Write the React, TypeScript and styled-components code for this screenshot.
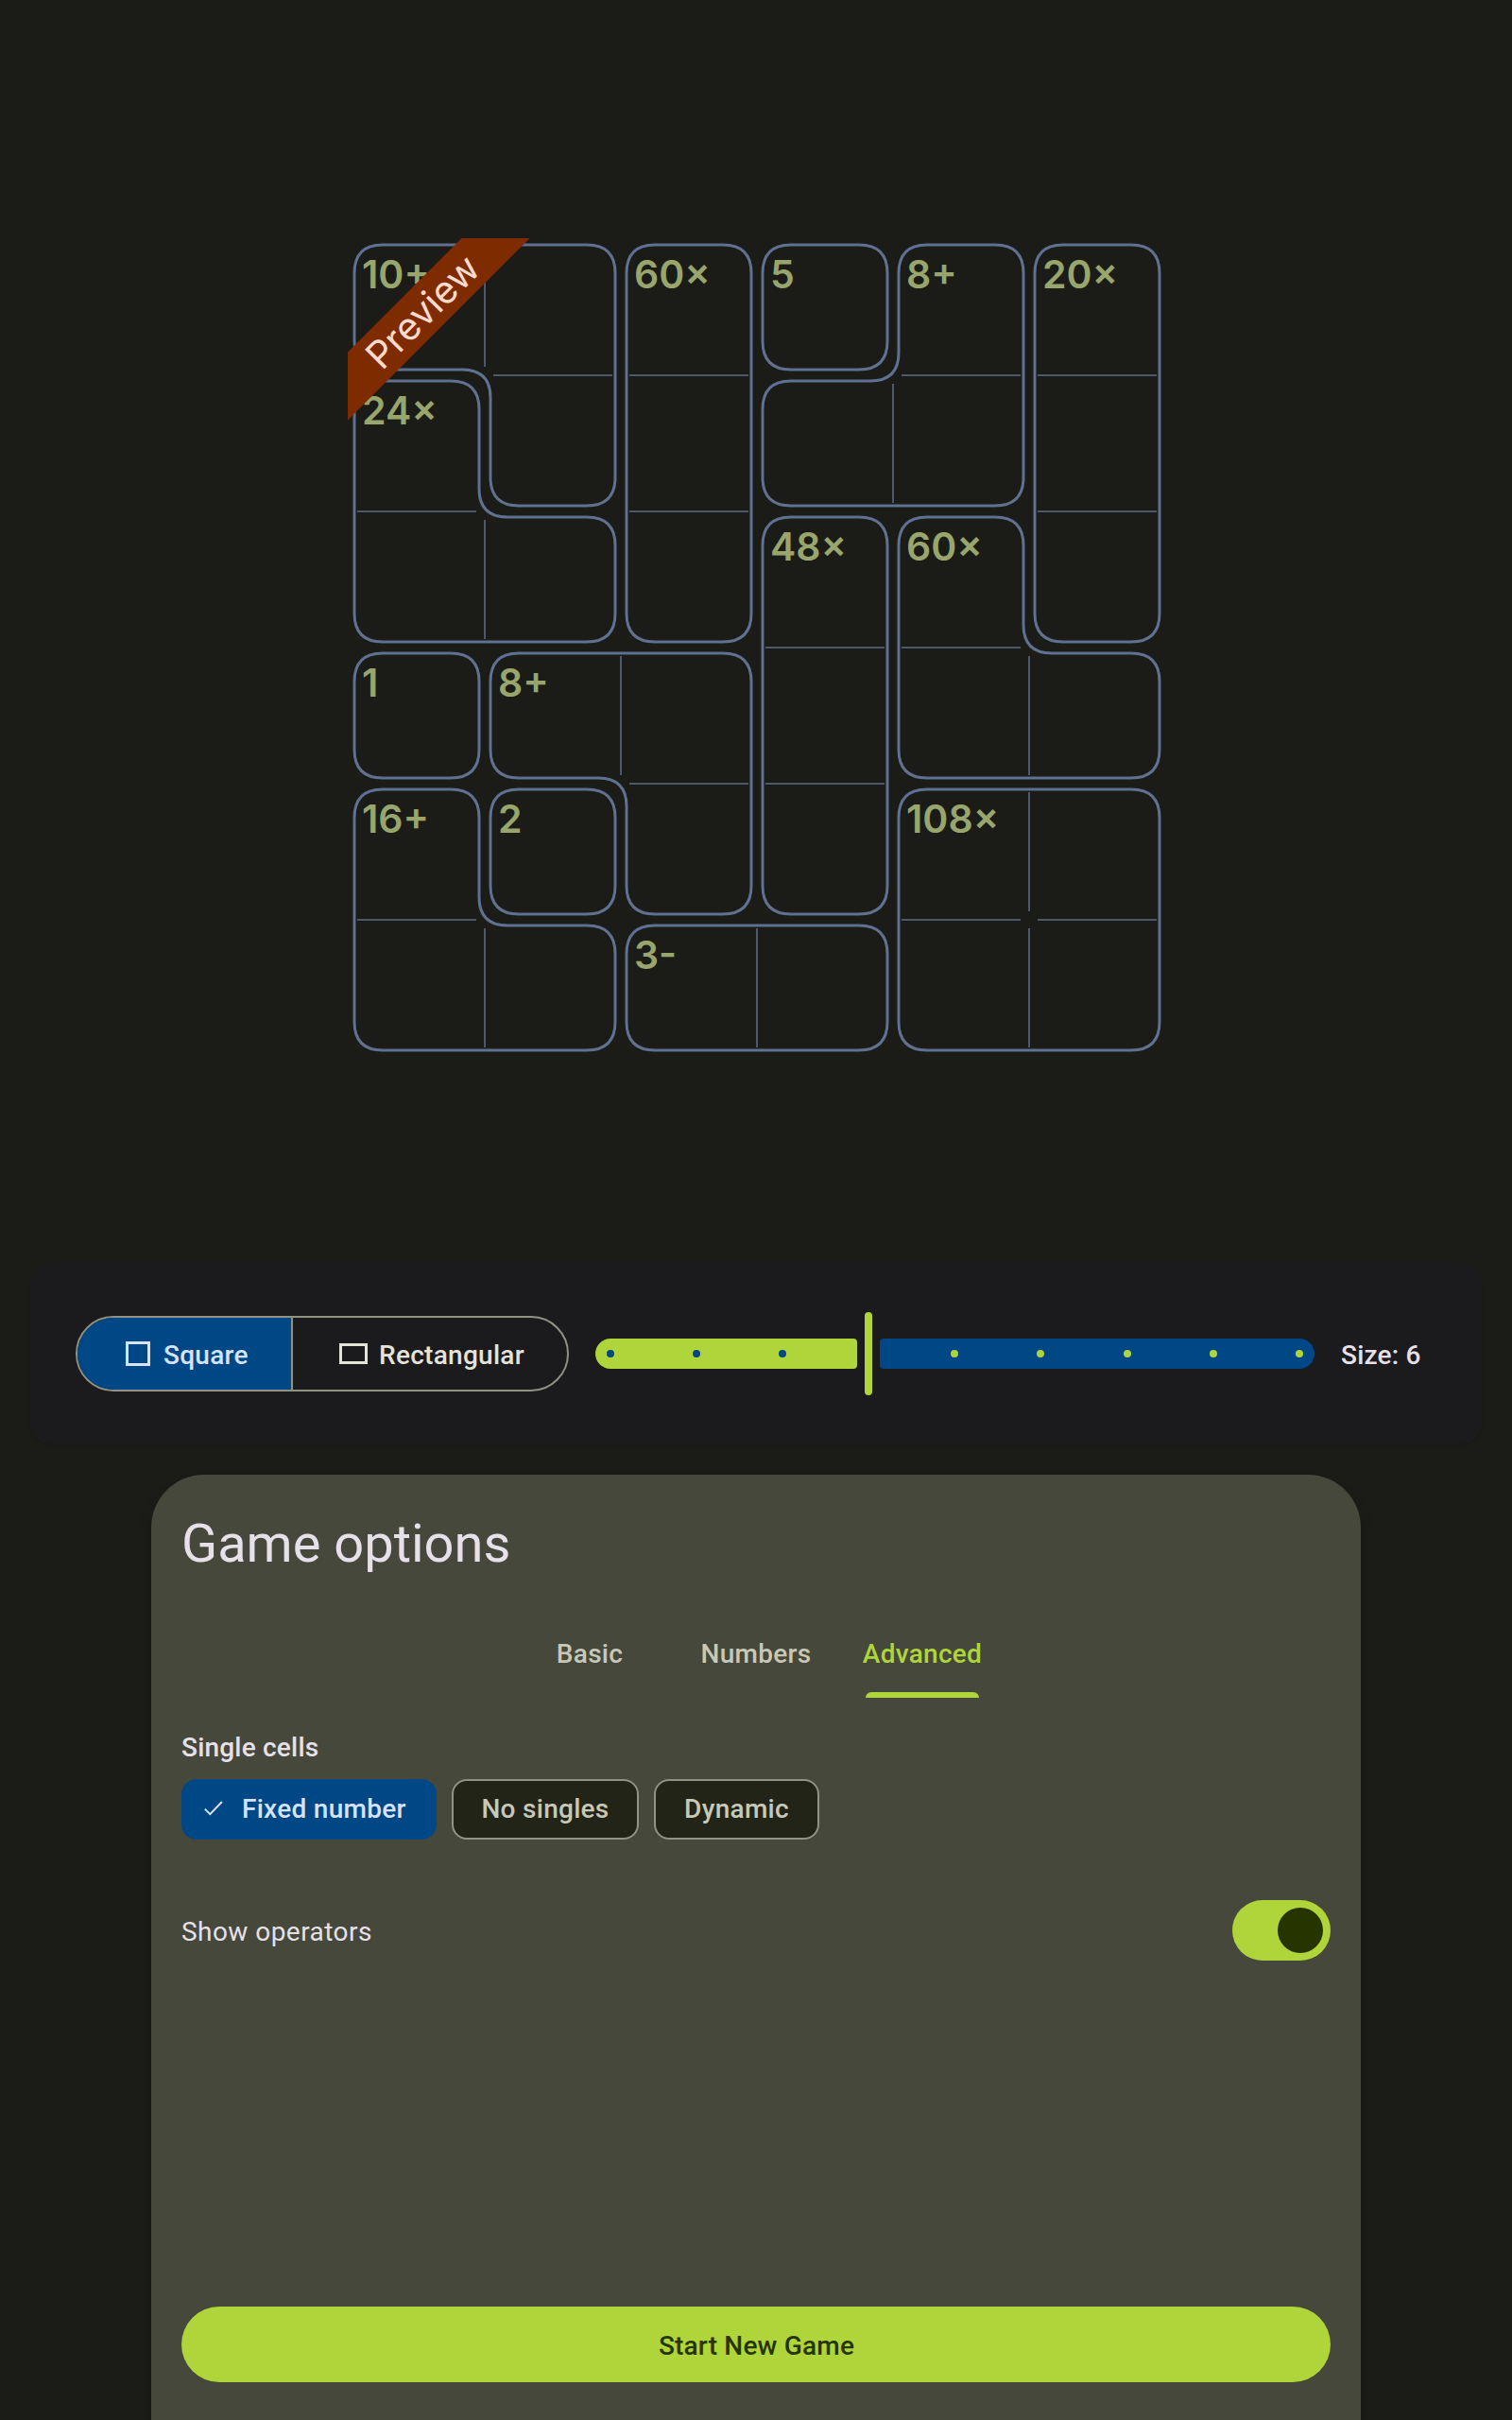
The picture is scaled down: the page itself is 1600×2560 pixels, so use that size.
import React from "react";
import styled, { createGlobalStyle } from "styled-components";

const CELL = 144;
const INSET = 6;
const GAP = 9;
const RADIUS = 30;
const N = 6;

type Cell = [number, number];
type Cage = { clue: string; cells: Cell[] };

const cages: Cage[] = [
  { clue: "10+", cells: [[0, 0], [0, 1], [1, 1]] },
  { clue: "60×", cells: [[0, 2], [1, 2], [2, 2]] },
  { clue: "5", cells: [[0, 3]] },
  { clue: "8+", cells: [[0, 4], [1, 4], [1, 3]] },
  { clue: "20×", cells: [[0, 5], [1, 5], [2, 5]] },
  { clue: "24×", cells: [[1, 0], [2, 0], [2, 1]] },
  { clue: "48×", cells: [[2, 3], [3, 3], [4, 3]] },
  { clue: "60×", cells: [[2, 4], [3, 4], [3, 5]] },
  { clue: "1", cells: [[3, 0]] },
  { clue: "8+", cells: [[3, 1], [3, 2], [4, 2]] },
  { clue: "16+", cells: [[4, 0], [5, 0], [5, 1]] },
  { clue: "2", cells: [[4, 1]] },
  { clue: "108×", cells: [[4, 4], [4, 5], [5, 4], [5, 5]] },
  { clue: "3-", cells: [[5, 2], [5, 3]] },
];

const has = (cells: Cell[], r: number, c: number) =>
  cells.some(([a, b]) => a === r && b === c);

// Walks the cage boundary clockwise and rounds every corner of the inset outline.
function outline(cells: Cell[]): string {
  const next = new Map<string, [number, number]>();
  const add = (x1: number, y1: number, x2: number, y2: number) =>
    next.set(`${x1},${y1}`, [x2, y2]);
  cells.forEach(([r, c]) => {
    if (!has(cells, r - 1, c)) add(c, r, c + 1, r);
    if (!has(cells, r, c + 1)) add(c + 1, r, c + 1, r + 1);
    if (!has(cells, r + 1, c)) add(c + 1, r + 1, c, r + 1);
    if (!has(cells, r, c - 1)) add(c, r + 1, c, r);
  });
  const start: [number, number] = [cells[0][1], cells[0][0]];
  const loop: [number, number][] = [];
  let p = start;
  do {
    loop.push(p);
    p = next.get(`${p[0]},${p[1]}`)!;
  } while (p[0] !== start[0] || p[1] !== start[1]);

  const parts: string[] = [];
  loop.forEach((q, i) => {
    const a = loop[(i + loop.length - 1) % loop.length];
    const b = loop[(i + 1) % loop.length];
    const din = [q[0] - a[0], q[1] - a[1]];
    const dout = [b[0] - q[0], b[1] - q[1]];
    if (din[0] === dout[0] && din[1] === dout[1]) return;
    const x = q[0] * CELL - INSET * (din[1] + dout[1]);
    const y = q[1] * CELL + INSET * (din[0] + dout[0]);
    parts.push(
      `${parts.length ? "L" : "M"}${x - din[0] * RADIUS} ${y - din[1] * RADIUS}` +
        `Q${x} ${y} ${x + dout[0] * RADIUS} ${y + dout[1] * RADIUS}`
    );
  });
  return parts.join("") + "Z";
}

function dividers(cells: Cell[]): string {
  let d = "";
  cells.forEach(([r, c]) => {
    const x = c * CELL;
    const y = r * CELL;
    if (has(cells, r, c + 1)) d += `M${x + CELL} ${y + GAP}V${y + CELL - GAP}`;
    if (has(cells, r + 1, c)) d += `M${x + GAP} ${y + CELL}H${x + CELL - GAP}`;
  });
  return d;
}

const Global = createGlobalStyle`
  * { box-sizing: border-box; }
  body { margin: 0; background: #1b1c17; }
  button { font: inherit; }
`;

const Page = styled.div`
  width: 1600px;
  height: 2560px;
  overflow: hidden;
  display: flex;
  flex-direction: column;
  align-items: center;
  background: #1b1c17;
  font-family: Roboto, "Liberation Sans", sans-serif;
  font-size: 28px;
  font-weight: 500;
  letter-spacing: 0.2px;
  color: #e6e0e9;
`;

const BoardArea = styled.main`
  height: 1335px;
  padding: 252px 0 0 2px;
`;

const BoardFrame = styled.div`
  position: relative;
  padding: 1px;
  overflow: hidden;
`;

const Board = styled.div`
  display: grid;
  grid-template-columns: repeat(${N}, ${CELL}px);
  grid-auto-rows: ${CELL}px;
`;

const Square = styled.div`
  padding: 12px 0 0 14px;
  font-family: Inter, sans-serif;
  font-size: 41px;
  line-height: 50px;
  font-weight: 600;
  letter-spacing: 0;
  color: #98a56c;
`;

const Lines = styled.svg`
  position: absolute;
  top: 1px;
  left: 1px;
`;

const Ribbon = styled.div`
  position: absolute;
  left: -72px;
  top: 53px;
  width: 300px;
  height: 51px;
  padding-left: 3px;
  background: #7f2b00;
  color: #ffdbcf;
  font-family: Inter, sans-serif;
  font-size: 40px;
  font-weight: 400;
  letter-spacing: 0;
  line-height: 51px;
  text-align: center;
  transform: rotate(-45deg);
`;

const SizePanel = styled.section`
  width: 1536px;
  height: 193px;
  padding: 0 64px 0 48px;
  display: flex;
  align-items: center;
  border-radius: 24px;
  background: #1b1b1d;
  box-shadow: 0 2px 3px rgba(0, 0, 0, 0.08);
`;

const Segments = styled.div`
  width: 522px;
  height: 80px;
  display: flex;
  overflow: hidden;
  border: 2px solid #909283;
  border-radius: 40px;
  margin-top: 1px;
`;

const Segment = styled.button<{ $active?: boolean }>`
  flex: ${(p) => (p.$active ? "0 0 228px" : "1")};
  display: flex;
  align-items: center;
  padding: 2px 0 0 ${(p) => (p.$active ? 51 : 49)}px;
  gap: ${(p) => (p.$active ? 14 : 12)}px;
  border: 0;
  border-right: ${(p) => (p.$active ? "2px solid #909283" : "0")};
  background: ${(p) => (p.$active ? "#004785" : "transparent")};
  color: ${(p) => (p.$active ? "#d5e3ff" : "#e4e3d9")};
  letter-spacing: 0.28px;
`;

const Outline = styled.i<{ $w: number; $h: number }>`
  width: ${(p) => p.$w}px;
  height: ${(p) => p.$h}px;
  border: 3px solid currentColor;
  margin-top: -2px;
`;

const Slider = styled.div`
  width: 761px;
  height: 88px;
  margin: 1px 28px 0;
  display: flex;
  align-items: center;
  gap: 8px;
`;

const Track = styled.div<{ $active?: boolean }>`
  flex: 0 0 ${(p) => (p.$active ? 277 : 460)}px;
  height: 32px;
  display: flex;
  align-items: center;
  justify-content: space-between;
  padding: ${(p) => (p.$active ? "0 75px 0 12px" : "0 12px 0 75px")};
  border-radius: ${(p) => (p.$active ? "16px 4px 4px 16px" : "4px 16px 16px 4px")};
  background: ${(p) => (p.$active ? "#afd53a" : "#004785")};
  color: ${(p) => (p.$active ? "#004785" : "#afd53a")};
`;

const Stop = styled.i`
  width: 8px;
  height: 8px;
  border-radius: 4px;
  background: currentColor;
`;

const Handle = styled.div`
  flex: 0 0 8px;
  height: 88px;
  border-radius: 4px;
  background: #afd53a;
`;

const SizeLabel = styled.span`
  padding-top: 3px;
  white-space: nowrap;
`;

const Sheet = styled.section`
  width: 1280px;
  flex: 1;
  margin-top: 32px;
  padding: 40px 32px;
  display: flex;
  flex-direction: column;
  border-radius: 56px 56px 0 0;
  background: #46483b;
  box-shadow: 0 12px 16px rgba(0, 0, 0, 0.2);
`;

const Title = styled.h1`
  margin: 0;
  font-size: 56px;
  line-height: 66px;
  font-weight: 400;
  letter-spacing: 0;
`;

const Tabs = styled.nav`
  display: flex;
  justify-content: center;
  margin-top: 34px;
  height: 96px;
`;

const Tab = styled.div<{ $active?: boolean }>`
  width: 176px;
  display: flex;
  flex-direction: column;
  align-items: center;
  padding-top: 33px;
  line-height: 33px;
  letter-spacing: 0.28px;
  color: ${(p) => (p.$active ? "#afd53a" : "#c7c8b7")};
`;

const Indicator = styled.i`
  width: 120px;
  height: 6px;
  margin-top: 24px;
  border-radius: 6px 6px 0 0;
  background: #afd53a;
`;

const GroupLabel = styled.h2`
  margin: 36px 0 0;
  font-size: 28px;
  line-height: 34px;
  font-weight: 500;
`;

const Chips = styled.div`
  display: flex;
  gap: 16px;
  margin-top: 16px;
`;

const Chip = styled.button<{ $active?: boolean; $w: number }>`
  width: ${(p) => p.$w}px;
  height: 64px;
  display: flex;
  align-items: center;
  justify-content: ${(p) => (p.$active ? "flex-start" : "center")};
  gap: 20px;
  padding: 0 0 2px ${(p) => (p.$active ? 22 : 0)}px;
  border: 2px solid ${(p) => (p.$active ? "#004785" : "#909283")};
  border-radius: 16px;
  background: ${(p) => (p.$active ? "#004785" : "#222418")};
  color: ${(p) => (p.$active ? "#d5e3ff" : "#c7c8b7")};
  letter-spacing: 0.28px;
`;

const OptionRow = styled.label`
  display: flex;
  align-items: center;
  justify-content: space-between;
  height: 64px;
  margin-top: 64px;
  font-weight: 400;
  letter-spacing: 0.45px;
`;

const OptionName = styled.span`
  padding-top: 2px;
`;

const Switch = styled.span`
  width: 104px;
  height: 64px;
  padding: 8px;
  display: flex;
  justify-content: flex-end;
  border-radius: 32px;
  background: #afd53a;
`;

const Thumb = styled.i`
  width: 48px;
  height: 48px;
  border-radius: 50%;
  background: #263500;
`;

const Start = styled.button`
  height: 80px;
  margin-top: auto;
  padding: 2px 0 0 1px;
  border: 0;
  border-radius: 40px;
  background: #afd53a;
  color: #263500;
  letter-spacing: 0.2px;
`;

export default function App() {
  const clueAt = (r: number, c: number) =>
    cages.find(({ cells }) => cells[0][0] === r && cells[0][1] === c)?.clue;
  return (
    <Page>
      <Global />
      <BoardArea>
        <BoardFrame>
          <Board>
            {Array.from({ length: N * N }, (_, i) => (
              <Square key={i}>{clueAt(Math.floor(i / N), i % N)}</Square>
            ))}
          </Board>
          <Lines width={N * CELL} height={N * CELL} fill="none">
            {cages.map(({ cells }, i) => (
              <g key={i}>
                <path d={dividers(cells)} stroke="#4d596b" strokeWidth="2" />
                <path d={outline(cells)} stroke="#5f7190" strokeWidth="3" />
              </g>
            ))}
          </Lines>
          <Ribbon>Preview</Ribbon>
        </BoardFrame>
      </BoardArea>

      <SizePanel>
        <Segments>
          <Segment $active>
            <Outline $w={26} $h={26} />
            Square
          </Segment>
          <Segment>
            <Outline $w={30} $h={22} />
            Rectangular
          </Segment>
        </Segments>
        <Slider>
          <Track $active>
            <Stop />
            <Stop />
            <Stop />
          </Track>
          <Handle />
          <Track>
            <Stop />
            <Stop />
            <Stop />
            <Stop />
            <Stop />
          </Track>
        </Slider>
        <SizeLabel>Size: 6</SizeLabel>
      </SizePanel>

      <Sheet>
        <Title>Game options</Title>
        <Tabs>
          <Tab>Basic</Tab>
          <Tab>Numbers</Tab>
          <Tab $active>
            Advanced
            <Indicator />
          </Tab>
        </Tabs>
        <GroupLabel>Single cells</GroupLabel>
        <Chips>
          <Chip $active $w={270}>
            <svg width="20" height="16" viewBox="0 0 20 16" fill="none" stroke="currentColor" strokeWidth="2">
              <path d="M0.8 8.6L6.3 14.1L18.9 1" />
            </svg>
            Fixed number
          </Chip>
          <Chip $w={198}>No singles</Chip>
          <Chip $w={175}>Dynamic</Chip>
        </Chips>
        <OptionRow>
          <OptionName>Show operators</OptionName>
          <Switch>
            <Thumb />
          </Switch>
        </OptionRow>
        <Start>Start New Game</Start>
      </Sheet>
    </Page>
  );
}
